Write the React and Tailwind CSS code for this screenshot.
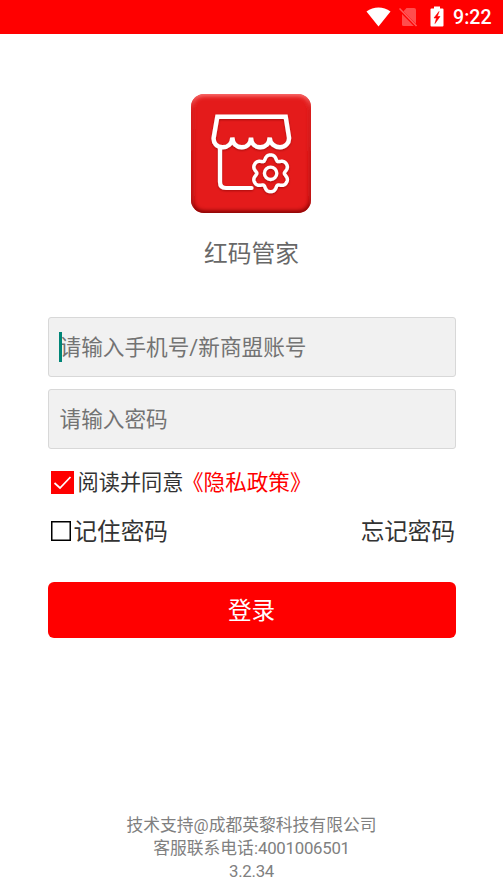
const cjk = "font-['Roboto','Noto_Sans_CJK_SC',sans-serif]";

// Six-lobed gear outline, traced around its centre; lobes are broad and the valleys rounded.
const gearPath =
  Array.from({ length: 180 }, (_, i) => {
    const t = (i / 180) * Math.PI * 2;
    const r = 16.5 + 2.3 * Math.cos(6 * t) - 0.45 * Math.cos(12 * t);
    const x = 79.6 + r * Math.sin(t);
    const y = 79.3 - r * Math.cos(t);
    return `${i ? "L" : "M"}${x.toFixed(2)} ${y.toFixed(2)}`;
  }).join("") + "Z";

function StatusBar() {
  return (
    <header className="flex h-[33.5px] shrink-0 items-center justify-end bg-[#ff0000] pr-[11.5px] text-white">
      <svg className="mr-[8px] h-[20px] w-[25px]" viewBox="0 0 25 20" fill="currentColor">
        <path d="M.5 4.6C7.5-.8 17.5-.8 24.5 4.6L12.5 19.4Z" />
      </svg>
      <svg className="mr-[12px] h-[20px] w-[19px]" viewBox="0 0 19 20">
        <path d="M7.5 1H15Q17 1 17 3V17.5Q17 19 15.5 19H4.5Q3 19 3 17.5V6Z" fill="#ff4d4d" />
        <path d="M1 3L18 20" stroke="#ff0000" strokeWidth="3" />
        <path d="M.5 1.5L17.5 19" stroke="#ff5c5c" strokeWidth="1.5" />
      </svg>
      <svg className="mr-[9.5px] h-[21px] w-[14px]" viewBox="0 0 14 21">
        <path d="M1.5 2.5H4V.5H10V2.5H12.5Q13.5 2.5 13.5 3.5V19.5Q13.5 20.5 12.5 20.5H1.5Q.5 20.5 .5 19.5V3.5Q.5 2.5 1.5 2.5Z" fill="currentColor" />
        <path d="M9 5.5L4 12H6.5L5 17.5L10 10.5H7.3Z" fill="#ff0000" stroke="#ff0000" strokeWidth=".6" />
      </svg>
      <span className="pt-[3px] text-[19.5px] font-medium leading-[32px]">9:22</span>
    </header>
  );
}

function Logo() {
  return (
    <svg className="mr-px h-[120px] w-[120px]" viewBox="0 0 120 120" fill="none">
      <defs>
        <filter id="soft" x="-10%" y="-10%" width="120%" height="120%">
          <feGaussianBlur stdDeviation="2" />
        </filter>
        <clipPath id="tile">
          <rect x="0" y="0" width="120" height="119" rx="13" />
        </clipPath>
        <linearGradient id="rim" x1="0" y1="0" x2="0" y2="1">
          <stop offset="0" stopColor="#ff8080" />
          <stop offset=".12" stopColor="#d62020" />
          <stop offset=".85" stopColor="#b51212" />
          <stop offset="1" stopColor="#720000" />
        </linearGradient>
        <filter id="lift" x="-10%" y="-10%" width="120%" height="120%">
          <feDropShadow dx="0" dy="1" stdDeviation=".8" floodColor="#700" floodOpacity=".55" />
        </filter>
      </defs>
      <g clipPath="url(#tile)">
        <rect width="120" height="120" fill="#e41b1b" />
        <rect x="0" y="-.5" width="120.5" height="120" rx="13" stroke="url(#rim)" strokeWidth="5" filter="url(#soft)" />
      </g>
      <g stroke="#fff" strokeLinejoin="round" strokeLinecap="round" filter="url(#lift)">
        <path strokeWidth="4.4" strokeLinejoin="miter" d="M26.3 22.8H94.7L98 43.5C98.5 49 94 53.2 89 53.2C84 53.2 79 50 78.7 43.5C78.3 50 74 53.2 69.3 53.2C64.5 53.2 60.3 50 60 43.5C59.7 50 55.5 53.2 50.7 53.2C46 53.2 41.7 50 41.3 43.5C41 50 36.5 53.2 31.5 53.2C26 53.2 22 49 22.7 43.5Z" />
        <path strokeWidth="4.2" d="M29 53V88Q29 94 35 94H60.5" />
        <path strokeWidth="3.4" d={gearPath} />
        <circle strokeWidth="3.3" cx="79.6" cy="79.3" r="6.2" />
      </g>
    </svg>
  );
}

function Field({ text, focused }) {
  return (
    <div className="flex h-[60px] items-center rounded-[3px] border border-[#d8d8d8] bg-[#f1f1f1] pl-[11px] text-[21.65px] text-[#737373]">
      <span className="relative pt-[2px] leading-[30px]">
        {focused && <i className="absolute -left-px top-px h-[30px] w-[3px] bg-[#008577]" />}
        {text}
      </span>
    </div>
  );
}

export default function App() {
  return (
    <div className={`flex h-[894px] w-[503px] flex-col overflow-hidden bg-white ${cjk}`}>
      <StatusBar />
      <main className="flex flex-1 flex-col px-[47.5px]">
        <div className="flex flex-col items-center pt-[60px]">
          <Logo />
          <h1 className="mt-[22px] text-[23.7px] leading-[36px] text-[#686868]">红码管家</h1>
        </div>
        <div className="mt-[45px] flex flex-col gap-[12px]">
          <Field text="请输入手机号/新商盟账号" focused />
          <Field text="请输入密码" />
        </div>
        <div className="mt-[19px] flex h-[30px] items-center pl-[3.5px] text-[21.2px] text-[#333]">
          <svg className="mr-[3.5px] h-[23px] w-[23px] shrink-0" viewBox="0 0 23 23" fill="none">
            <rect width="23" height="23" fill="#ff0000" />
            <path d="M3.5 12L9 17L19.5 6" stroke="#fff" strokeWidth="1.7" />
          </svg>
          <span className="pt-px">阅读并同意</span>
          <span className="-ml-[1.5px] whitespace-nowrap pt-[2px] text-[21.6px] text-[#ff0000]">《隐私政策》</span>
        </div>
        <div className="mt-[15px] flex h-[36px] items-center text-[23.6px] text-[#333]">
          <svg className="ml-[3.5px] mr-[2.5px] h-[20px] w-[20px] shrink-0" viewBox="0 0 20 20" fill="none">
            <rect x=".75" y=".75" width="18.5" height="18.5" stroke="#000" strokeWidth="1.5" />
          </svg>
          <span className="pt-[4px]">记住密码</span>
          <span className="ml-auto pr-[.5px] pt-[4px]">忘记密码</span>
        </div>
        <button className="mt-[33px] flex h-[56px] items-center justify-center rounded-[6px] bg-[#ff0000] pt-[4px] text-[23.6px] text-white">
          登录
        </button>
        <footer className="mb-[11px] mt-auto text-center text-[16.8px] leading-[23px] text-[#808080]">
          <p>技术支持@成都英黎科技有限公司</p>
          <p>客服联系电话:<span className="tracking-[-0.25px]">4001006501</span></p>
          <p className="tracking-[-0.25px]">3.2.34</p>
        </footer>
      </main>
    </div>
  );
}
